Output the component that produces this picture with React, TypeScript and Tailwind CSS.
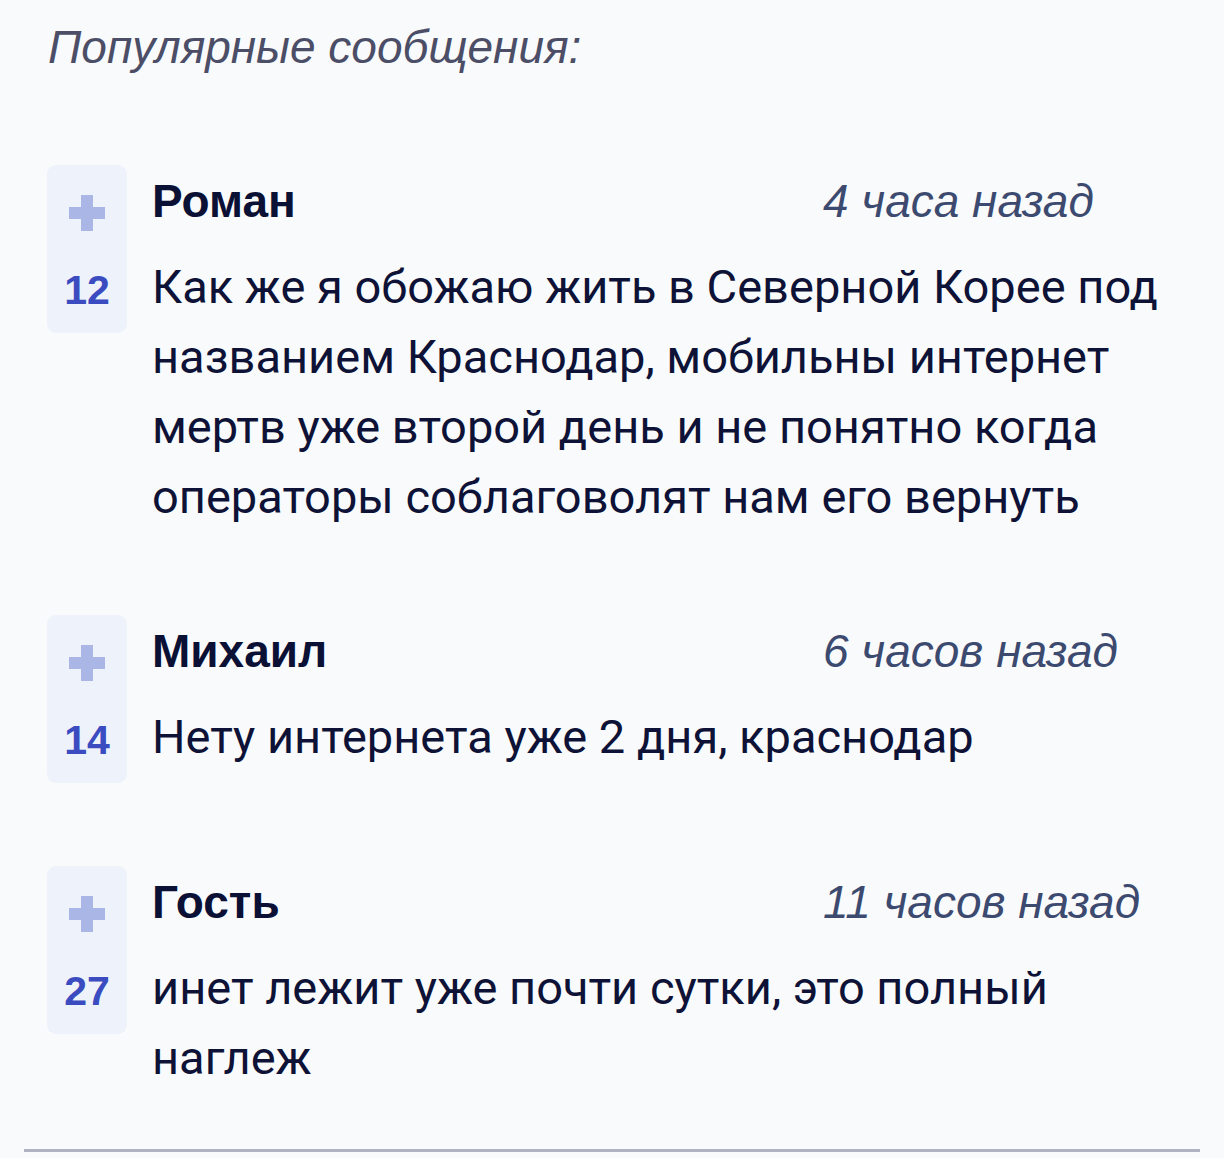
import React from "react";

type Msg = { name: string; time: string; votes: number; text: string };

const messages: Msg[] = [
  {
    name: "Роман",
    time: "4 часа назад",
    votes: 12,
    text: "Как же я обожаю жить в Северной Корее под названием Краснодар, мобильны интернет мертв уже второй день и не понятно когда операторы соблаговолят нам его вернуть",
  },
  { name: "Михаил", time: "6 часов назад", votes: 14, text: "Нету интернета уже 2 дня, краснодар" },
  { name: "Гость", time: "11 часов назад", votes: 27, text: "инет лежит уже почти сутки, это полный наглеж" },
];

function Plus() {
  return (
    <svg width="36" height="36" viewBox="0 0 36 36" className="block">
      <rect x="12" y="0" width="12" height="36" fill="#aab7e6" />
      <rect x="0" y="12" width="36" height="12" fill="#aab7e6" />
    </svg>
  );
}

export default function App() {
  return (
    <div className="min-h-[1158px] w-[1224px] bg-[#f8fafc] relative">
      <div className="pt-[18px] pl-[48px]">
        <h2 className="text-[46px] leading-[58px] italic text-[#4b4e66] font-['Liberation_Sans',Arial,sans-serif]">
          Популярные сообщения:
        </h2>
      </div>
      <div className="pl-[47px] pt-[89px] flex flex-col gap-[83px]">
        {messages.map((m) => (
          <div key={m.name} className="flex items-start gap-[25px]">
            <div className="w-[80px] h-[168px] shrink-0 rounded-[9px] bg-[#eef2fb] flex flex-col items-center pt-[30px]">
              <Plus />
              <div className="mt-[39px] text-[41px] leading-[40px] font-bold text-[#3a4cc0] font-['Liberation_Sans',Arial,sans-serif]">
                {m.votes}
              </div>
            </div>
            <div className="flex flex-col pt-[8px] w-[1040px]">
              <div className="flex h-[56px] items-center">
                <div className="w-[671px] shrink-0 text-[46px] font-bold text-[#0b1035] font-['Liberation_Sans',Arial,sans-serif] leading-[56px]">
                  {m.name}
                </div>
                <div className="text-[46px] italic text-[#3d4a70] font-['Liberation_Sans',Arial,sans-serif] leading-[56px]">
                  {m.time}
                </div>
              </div>
              <p className="mt-[23px] text-[47px] leading-[70px] text-[#0d1236] font-['Roboto',sans-serif]">
                {m.text}
              </p>
            </div>
          </div>
        ))}
      </div>
      <div className="absolute left-[24px] right-[24px] top-[1149px] h-[3px] bg-[#aeb2c1]" />
    </div>
  );
}
